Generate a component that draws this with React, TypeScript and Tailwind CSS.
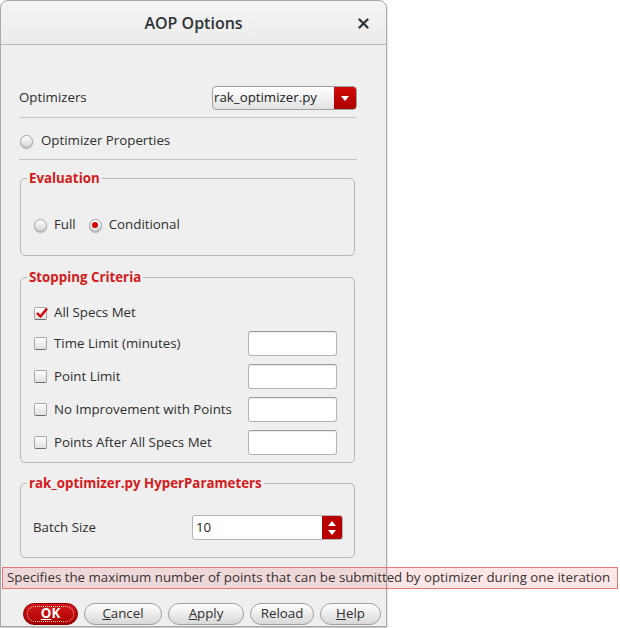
import React from 'react';

const FONT = { fontFamily: '"Open Sans", "Noto Sans", sans-serif' };

const Radio: React.FC<{ checked?: boolean }> = ({ checked }) => (
    <span className="flex items-center justify-center w-[13px] h-[13px] rounded-full border border-[#a4a4a4] bg-gradient-to-b from-white to-[#d6d6d6] shadow-[0_1px_1px_rgba(0,0,0,0.25)]">
        {checked && <span className="w-[6px] h-[6px] rounded-full bg-[#d40000]" />}
    </span>
);

const Checkbox: React.FC<{ checked?: boolean }> = ({ checked }) => (
    <span className="relative flex items-center justify-center w-[13px] h-[13px] rounded-[2px] border border-[#a8a8a8] border-b-[#6e6e6e] bg-gradient-to-b from-white to-[#e0e0e0]">
        {checked && (
            <svg width="13" height="13" viewBox="0 0 13 13" className="absolute -top-[2px] left-[0px]">
                <path d="M2 7 L5.5 10.5 L12 2.5" fill="none" stroke="#d40000" strokeWidth="2.4" strokeLinejoin="miter" />
            </svg>
        )}
    </span>
);

const TextBox: React.FC<{ className?: string; value?: string }> = ({ className = '', value }) => (
    <div className={`h-[25px] rounded-[3px] border border-[#b4b4b4] border-t-[#9a9a9a] bg-white shadow-[inset_0_1px_1px_rgba(0,0,0,0.08)] flex items-center px-[3px] text-[#222] ${className}`}>
        {value}
    </div>
);

const Group: React.FC<{ title: string; className?: string; children: React.ReactNode }> = ({ title, className = '', children }) => (
    <div className={`border border-[#b8b8b8] rounded-[5px] ${className}`}>
        <div className="-mt-[10px] ml-[6px] w-fit h-[18px] px-[2px] bg-[#efefef] leading-[18px] font-bold text-[#d41a1a]">
            {title}
        </div>
        {children}
    </div>
);

const PillButton: React.FC<{ width: string; primary?: boolean; children: React.ReactNode }> = ({ width, primary, children }) => (
    <div
        className={`${width} h-[22px] rounded-full flex items-center justify-center text-[13.3px] ${
            primary
                ? 'bg-gradient-to-b from-[#d81818] to-[#a80000] border border-[#8a0000] text-white font-bold'
                : 'bg-gradient-to-b from-white to-[#d8d8d8] border border-[#a0a0a0] text-[#2e2e2e]'
        }`}
    >
        {primary ? (
            <span className="flex items-center justify-center w-[calc(100%-6px)] h-[16px] rounded-full border border-dotted border-white/80">
                {children}
            </span>
        ) : (
            children
        )}
    </div>
);

const CRITERIA = ['Time Limit (minutes)', 'Point Limit', 'No Improvement with Points', 'Points After All Specs Met'];

const App: React.FC = () => {
    return (
        <div className="relative w-[620px] h-[628px] bg-white text-[#2e2e2e]" style={FONT}>
            {/* Dialog */}
            <div className="w-[387px] h-[627px] flex flex-col bg-[#efefef] border border-[#a9a9a9] rounded-t-[8px] shadow-[0_1px_2px_rgba(0,0,0,0.3)]">
                {/* Title bar */}
                <div className="relative h-[44px] flex items-center justify-center border-b border-[#b9b9b9] rounded-t-[8px] bg-gradient-to-b from-[#f4f4f4] to-[#ececec]">
                    <span className="text-[16px] font-semibold text-[#2e3436]">AOP Options</span>
                    <svg width="11" height="11" viewBox="0 0 11 11" className="absolute right-[17px] top-[17px]">
                        <path d="M1.5 1.5 L9.5 9.5 M9.5 1.5 L1.5 9.5" stroke="#2e3436" strokeWidth="2.3" strokeLinecap="round" />
                    </svg>
                </div>

                {/* Body */}
                <div className="flex flex-col pl-[18px] pr-[29px] text-[13.3px]">
                    {/* Optimizers */}
                    <div className="mt-[41px] h-[24px] flex items-center justify-between">
                        <span>Optimizers</span>
                        <div className="w-[145px] h-[24px] flex rounded-[4px] border border-[#a0a0a0] bg-gradient-to-b from-white to-[#e2e2e2] overflow-hidden">
                            <span className="flex-1 flex items-center pl-[1px] text-[#222]">rak_optimizer.py</span>
                            <span className="w-[22px] flex items-center justify-center bg-gradient-to-b from-[#d20a0a] to-[#aa0000]">
                                <svg width="8" height="5" viewBox="0 0 8 5">
                                    <path d="M0 0 H8 L4 5 Z" fill="white" />
                                </svg>
                            </span>
                        </div>
                    </div>
                    <div className="mt-[7px] h-px bg-[#c4c4c4]" />

                    {/* Optimizer Properties */}
                    <div className="mt-[13px] h-[20px] flex items-center gap-[8px] pl-[1px]">
                        <Radio />
                        <span>Optimizer Properties</span>
                    </div>
                    <div className="mt-[8px] h-px bg-[#c4c4c4]" />

                    {/* Evaluation */}
                    <Group title="Evaluation" className="mt-[18px] ml-px mr-[2px] pb-[20px]">
                        <div className="mt-[28px] h-[20px] flex items-center pl-[13px]">
                            <Radio />
                            <span className="ml-[7px]">Full</span>
                            <span className="ml-[13px]"><Radio checked /></span>
                            <span className="ml-[7px]">Conditional</span>
                        </div>
                    </Group>

                    {/* Stopping Criteria */}
                    <Group title="Stopping Criteria" className="mt-[21px] ml-px mr-[2px] pb-[7px]">
                        <div className="mt-[17px] flex flex-col gap-[8px] pl-[13px] pr-[17px]">
                            <div className="h-[20px] flex items-center gap-[7px]">
                                <Checkbox checked />
                                <span>All Specs Met</span>
                            </div>
                            {CRITERIA.map(label => (
                                <div key={label} className="h-[25px] flex items-center">
                                    <Checkbox />
                                    <span className="ml-[7px] flex-1">{label}</span>
                                    <TextBox className="w-[89px]" />
                                </div>
                            ))}
                        </div>
                    </Group>

                    {/* HyperParameters */}
                    <Group title="rak_optimizer.py HyperParameters" className="mt-[20px] ml-px mr-[2px] pb-[17px]">
                        <div className="mt-[23px] h-[25px] flex items-center pl-[12px] pr-[11px]">
                            <span className="flex-1">Batch Size</span>
                            <div className="w-[151px] h-[25px] flex rounded-[3px] border border-[#b4b4b4] bg-white overflow-hidden">
                                <span className="flex-1 flex items-center pl-[3px] text-[#222]">10</span>
                                <span className="w-[20px] flex flex-col items-center justify-center gap-[4px] bg-[#b80000]">
                                    <svg width="8" height="5" viewBox="0 0 8 5"><path d="M0 5 H8 L4 0 Z" fill="white" /></svg>
                                    <svg width="8" height="5" viewBox="0 0 8 5"><path d="M0 0 H8 L4 5 Z" fill="white" /></svg>
                                </span>
                            </div>
                        </div>
                    </Group>
                </div>

                {/* Buttons */}
                <div className="mt-[45px] flex gap-[6px] pl-[22px]">
                    <PillButton width="w-[55px]" primary><span><u>O</u>K</span></PillButton>
                    <PillButton width="w-[78px]"><span><u>C</u>ancel</span></PillButton>
                    <PillButton width="w-[76px]"><span><u>A</u>pply</span></PillButton>
                    <PillButton width="w-[64px]">Reload</PillButton>
                    <PillButton width="w-[61px]"><span><u>H</u>elp</span></PillButton>
                </div>
            </div>

            {/* Tooltip */}
            <div className="absolute left-[2px] top-[567px] w-[616px] h-[22px] flex items-center pl-[4px] border border-[#e06060]/80 bg-[#ff3030]/[0.12] text-[13.3px] text-[#333] whitespace-nowrap">
                Specifies the maximum number of points that can be submitted by optimizer during one iteration
            </div>
        </div>
    );
};

export default App;
